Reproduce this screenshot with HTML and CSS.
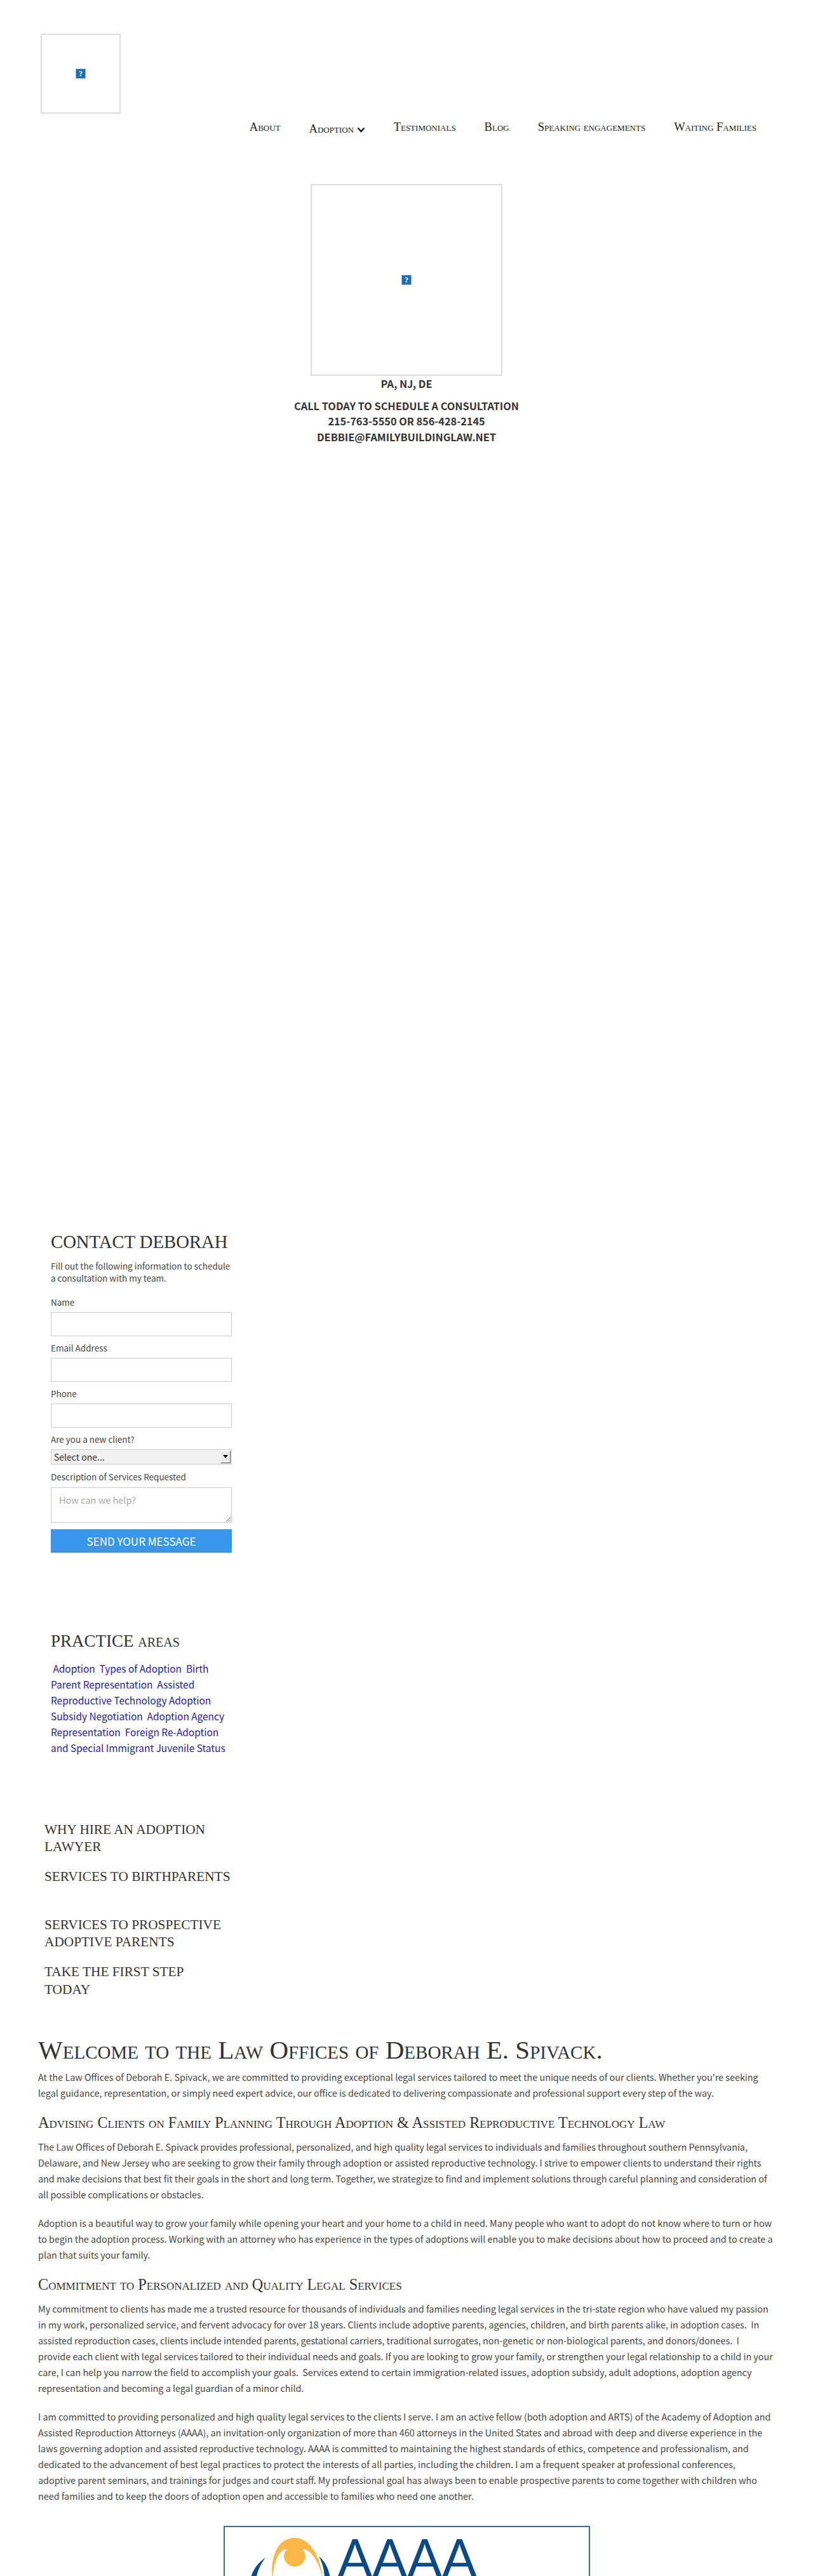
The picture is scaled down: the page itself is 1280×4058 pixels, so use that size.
FILE: index.html
```html
<!DOCTYPE html>
<html lang="en">
<head>
    <meta charset="UTF-8">
    <title>Law Offices of Deborah E. Spivack</title>
    <link rel="stylesheet" href="styles.css">
</head>
<body>
    <header class="site-header">
        <div class="logo-box">
            <svg class="broken-icon" viewBox="0 0 16 16"><rect x="0.5" y="0.5" width="15" height="15" fill="#1d6fb5" stroke="#8db4dc"/><text x="8" y="12" text-anchor="middle" class="broken-mark">?</text></svg>
        </div>
        <nav class="main-nav">
            <a href="#">About</a>
            <a href="#" class="nav-drop">Adoption <svg class="chevron" viewBox="0 0 13 9"><path d="M1.5 1.5 L6.5 7 L11.5 1.5" fill="none" stroke="#222" stroke-width="2.6"/></svg></a>
            <a href="#">Testimonials</a>
            <a href="#">Blog</a>
            <a href="#">Speaking engagements</a>
            <a href="#">Waiting Families</a>
        </nav>
    </header>

    <section class="hero">
        <div class="hero-img">
            <svg class="broken-icon" viewBox="0 0 16 16"><rect x="0.5" y="0.5" width="15" height="15" fill="#1d6fb5" stroke="#8db4dc"/><text x="8" y="12" text-anchor="middle" class="broken-mark">?</text></svg>
        </div>
        <p class="hero-states">PA, NJ, DE</p>
        <p class="hero-call">CALL TODAY TO SCHEDULE A CONSULTATION<br>215-763-5550 OR 856-428-2145<br>DEBBIE@FAMILYBUILDINGLAW.NET</p>
    </section>

    <aside class="sidebar">
        <form class="contact">
            <h2>CONTACT DEBORAH</h2>
            <p class="contact-intro">Fill out the following information to schedule a consultation with my team.</p>
            <label for="name">Name</label>
            <input type="text" id="name">
            <label for="email">Email Address</label>
            <input type="text" id="email">
            <label for="phone">Phone</label>
            <input type="text" id="phone">
            <label for="client">Are you a new client?</label>
            <div class="select-wrap">
                <select id="client"><option>Select one...</option></select>
                <span class="select-arrow"></span>
            </div>
            <label for="desc">Description of Services Requested</label>
            <textarea id="desc" placeholder="How can we help?"></textarea>
            <button type="button">SEND YOUR MESSAGE</button>
        </form>

        <div class="practice">
            <h2>PRACTICE <span>AREAS</span></h2>
            <p class="practice-links">&nbsp;<a href="#">Adoption</a>&nbsp; <a href="#">Types of Adoption</a>&nbsp; <a href="#">Birth Parent Representation</a>&nbsp; <a href="#">Assisted Reproductive Technology</a> <a href="#">Adoption Subsidy Negotiation</a>&nbsp; <a href="#">Adoption Agency Representation</a>&nbsp; <a href="#">Foreign Re-Adoption and Special Immigrant Juvenile Status</a></p>
        </div>

        <ul class="side-links">
            <li>WHY HIRE AN ADOPTION LAWYER</li>
            <li class="tall">SERVICES TO BIRTHPARENTS</li>
            <li>SERVICES TO PROSPECTIVE ADOPTIVE PARENTS</li>
            <li>TAKE THE FIRST STEP<br>TODAY</li>
        </ul>
    </aside>

    <main class="content">
        <h1>Welcome to the Law Offices of Deborah E. Spivack.</h1>
        <p>At the Law Offices of Deborah E. Spivack, we are committed to providing exceptional legal services tailored to meet the unique needs of our clients. Whether you're seeking legal guidance, representation, or simply need expert advice, our office is dedicated to delivering compassionate and professional support every step of the way.</p>
        <h3>Advising Clients on Family Planning Through Adoption &amp; Assisted Reproductive Technology Law</h3>
        <p>The Law Offices of Deborah E. Spivack provides professional, personalized, and high quality legal services to individuals and families throughout southern Pennsylvania, Delaware, and New Jersey who are seeking to grow their family through adoption or assisted reproductive technology. I strive to empower clients to understand their rights and make decisions that best fit their goals in the short and long term. Together, we strategize to find and implement solutions through careful planning and consideration of all possible complications or obstacles.</p>
        <p>Adoption is a beautiful way to grow your family while opening your heart and your home to a child in need. Many people who want to adopt do not know where to turn or how to begin the adoption process. Working with an attorney who has experience in the types of adoptions will enable you to make decisions about how to proceed and to create a plan that suits your family.</p>
        <h3>Commitment to Personalized and Quality Legal Services</h3>
        <p>My commitment to clients has made me a trusted resource for thousands of individuals and families needing legal services in the tri-state region who have valued my passion in my work, personalized service, and fervent advocacy for over 18 years. Clients include adoptive parents, agencies, children, and birth parents alike, in adoption cases.&nbsp; In assisted reproduction cases, clients include intended parents, gestational carriers, traditional surrogates, non-genetic or non-biological parents, and donors/donees.&nbsp; I<br>provide each client with legal services tailored to their individual needs and goals. If you are looking to grow your family, or strengthen your legal relationship to a child in your care, I can help you narrow the field to accomplish your goals.&nbsp; Services extend to certain immigration-related issues, adoption subsidy, adult adoptions, adoption agency representation and becoming a legal guardian of a minor child.</p>
        <p>I am committed to providing personalized and high quality legal services to the clients I serve. I am an active fellow (both adoption and ARTS) of the Academy of Adoption and Assisted Reproduction Attorneys (AAAA), an invitation-only organization of more than 460 attorneys in the United States and abroad with deep and diverse experience in the laws governing adoption and assisted reproductive technology. AAAA is committed to maintaining the highest standards of ethics, competence and professionalism, and dedicated to the advancement of best legal practices to protect the interests of all parties, including the children. I am a frequent speaker at professional conferences, adoptive parent seminars, and trainings for judges and court staff. My professional goal has always been to enable prospective parents to come together with children who need families and to keep the doors of adoption open and accessible to families who need one another.</p>
        <div class="aaaa-logo">
            <svg class="aaaa-mark" viewBox="0 0 130 72">
                <path d="M38 72 C34 40 44 6 73 6 C100 6 114 40 118 72 C112 46 102 30 90 24 L56 24 C46 30 40 46 38 72 Z" fill="#fbb748"/>
                <ellipse cx="73" cy="35" rx="17" ry="16" fill="#fbb748"/>
                <path d="M27 37 C14 46 6 58 3 72 L12 72 C14 58 20 46 27 37 Z" fill="#0b4a86"/>
                <path d="M111 35 C122 44 128 58 129 72 L120 72 C120 58 117 46 111 35 Z" fill="#0b4a86"/>
            </svg>
            <span class="aaaa-text">AAAA</span>
        </div>
    </main>
</body>
</html>
```

FILE: styles.css
```css
* {
    box-sizing: border-box;
}
html, body {
    margin: 0;
    padding: 0;
}
body {
    height: 4058px;
    overflow: hidden;
    background: #fff;
    color: #444;
    font-family: "Noto Sans CJK SC", Lato, sans-serif;
    font-size: 14.35px;
}
.site-header {
    display: flex;
    align-items: flex-start;
    height: 290px;
    padding: 53px 89px 0 64px;
}
.logo-box {
    flex: none;
    width: 126px;
    height: 126px;
    border: 2px solid #ddd;
    display: flex;
    align-items: center;
    justify-content: center;
}
.broken-icon {
    width: 16px;
    height: 16px;
}
.broken-mark {
    font-family: "Liberation Serif", serif;
    font-size: 12px;
    font-weight: bold;
    fill: #fff;
}
.main-nav {
    margin-left: auto;
    margin-top: 136px;
    display: flex;
    gap: 45px;
    font-family: "Liberation Serif", serif;
    font-size: 18.5px;
    line-height: 22px;
    font-variant: small-caps;
}
.main-nav a {
    color: #222;
    text-decoration: none;
    white-space: nowrap;
}
.nav-drop {
    position: relative;
    top: 3px;
}
.chevron {
    width: 13px;
    height: 9px;
}
.hero {
    text-align: center;
    font-weight: bold;
    font-size: 16.3px;
    line-height: 24.5px;
    color: #333;
}
.hero-img {
    width: 302px;
    height: 302px;
    margin: 0 auto;
    border: 2px solid #ddd;
    display: flex;
    align-items: center;
    justify-content: center;
}
.hero p {
    margin: 0;
}
.hero-states {
    padding-bottom: 10px;
}
.sidebar {
    margin-top: 1238px;
    margin-left: 80px;
    width: 285px;
}
.contact h2,
.practice h2 {
    margin: 0;
    font-family: "Liberation Serif", serif;
    font-size: 28.7px;
    font-weight: normal;
    line-height: 36px;
    white-space: nowrap;
    color: #333;
}
.contact-intro {
    margin: 10.5px 0 19px;
    font-size: 13.5px;
    line-height: 19px;
}
.contact label {
    display: block;
    font-size: 13.5px;
    line-height: 19px;
    margin-bottom: 6.5px;
}
.contact input,
.contact textarea {
    display: block;
    width: 100%;
    border: 1px solid #ccc;
    background: #fff;
    border-radius: 0;
}
.contact input {
    height: 38px;
    margin: 0 0 8.5px;
}
.select-wrap {
    position: relative;
    margin-bottom: 10px;
}
.contact select {
    display: block;
    width: 100%;
    height: 24px;
    padding-left: 4px;
    border: 1px solid #ccc;
    border-radius: 0;
    background: #f1f1f1;
    color: #333;
    font-family: "Noto Sans CJK SC", Lato, sans-serif;
    font-size: 14px;
    appearance: none;
}
.select-arrow {
    position: absolute;
    top: 2px;
    right: 2px;
    width: 16px;
    height: 20px;
    background: #eee;
    border: 1px solid;
    border-color: #fff #555 #555 #fff;
    pointer-events: none;
}
.select-arrow::after {
    content: "";
    position: absolute;
    left: 3px;
    top: 6px;
    border: 4px solid transparent;
    border-top: 5px solid #000;
}
.contact textarea {
    height: 56px;
    margin: 0 0 10px;
    padding: 8px 12px;
    font-family: "Noto Sans CJK SC", Lato, sans-serif;
    font-size: 14.5px;
}
.contact textarea::placeholder {
    color: #aaa;
}
.contact button {
    display: block;
    width: 100%;
    height: 37px;
    border: 0;
    background: #3897ea;
    color: #fff;
    font-family: "Noto Sans CJK SC", Lato, sans-serif;
    font-size: 17px;
}
.practice {
    margin-top: 121px;
}
.practice h2 {
    font-size: 27px;
}
.practice h2 span {
    font-size: 20px;
}
.practice-links {
    margin: 11.5px 0 0;
    width: 280px;
    font-size: 15.4px;
    line-height: 25px;
}
.practice-links a {
    color: #1a1ac8;
    text-decoration: none;
}
.side-links {
    list-style: none;
    margin: 102.5px 0 0 -10px;
    padding: 0;
    width: 298px;
    font-family: "Liberation Serif", serif;
    font-size: 21.3px;
    line-height: 27.5px;
    color: #333;
}
.side-links li {
    margin-bottom: 19.5px;
}
.side-links .tall {
    margin-bottom: 48px;
}
.content {
    margin: 56.5px 60px 0;
}
.content h1 {
    margin: 0 0 6px;
    font-family: "Liberation Serif", serif;
    font-size: 41px;
    font-weight: normal;
    font-variant: small-caps;
    line-height: 48px;
    color: #333;
}
.content h3 {
    margin: 20.5px 0 9.5px;
    font-family: "Liberation Serif", serif;
    font-size: 24.2px;
    font-weight: normal;
    font-variant: small-caps;
    line-height: 30px;
    color: #333;
}
.content p {
    margin: 0 0 20px;
    font-size: 14.35px;
    line-height: 25px;
}
.aaaa-logo {
    margin: 35.5px auto 0;
    width: 577px;
    height: 160px;
    border: 2px solid #3e6a8e;
    display: flex;
    align-items: flex-start;
    gap: 11px;
    padding: 11px 0 0 37px;
}
.aaaa-mark {
    width: 130px;
    height: 72px;
    flex: none;
}
.aaaa-text {
    font-family: Lato, sans-serif;
    font-size: 81px;
    line-height: 72px;
    color: #0b4a86;
}
```
